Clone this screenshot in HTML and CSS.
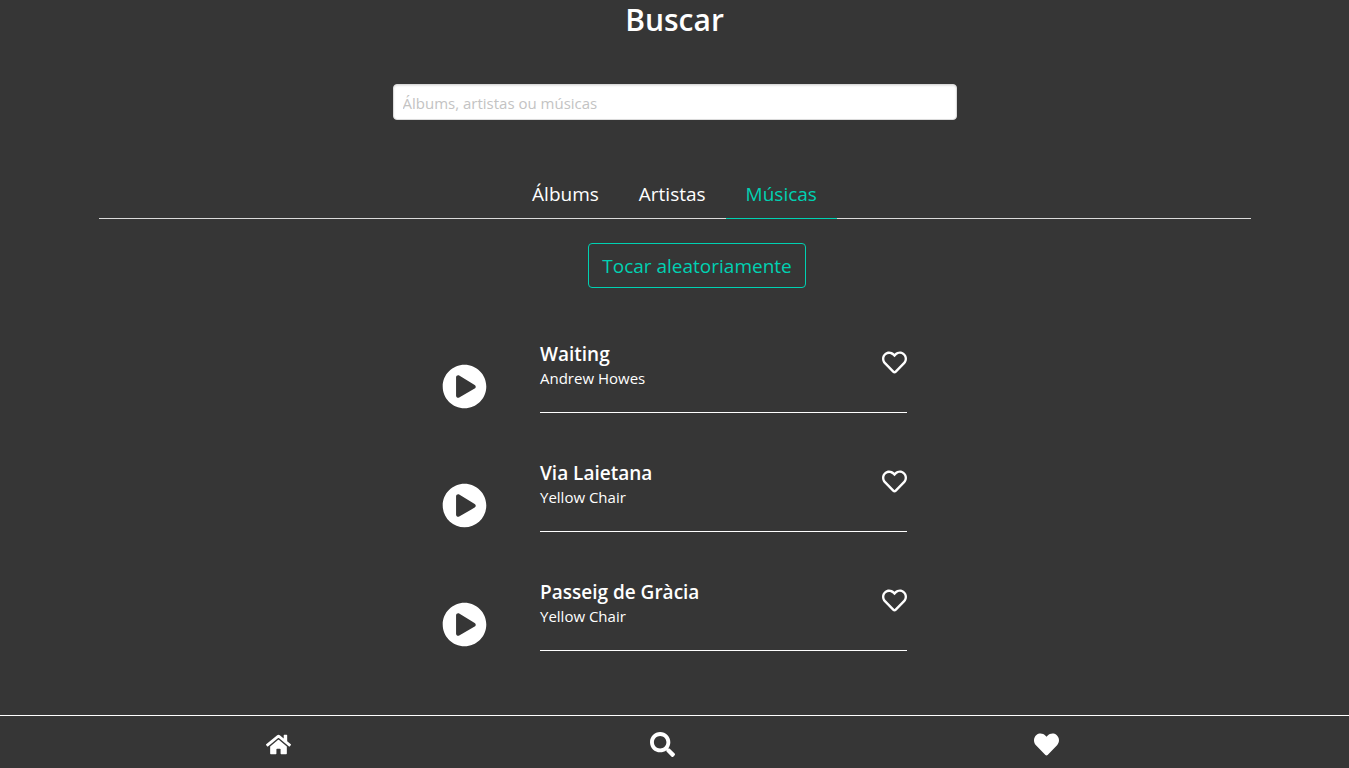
FILE: index.html
```html
<!DOCTYPE html>
<html lang="pt-BR">
<head>
<meta charset="utf-8">
<meta name="viewport" content="width=device-width, initial-scale=1">
<title>Buscar</title>
<link rel="stylesheet" href="styles.css">
</head>
<body>
<svg class="sprite" aria-hidden="true">
  <symbol id="play" viewBox="0 0 512 512"><path d="M256 8C119 8 8 119 8 256s111 248 248 248 248-111 248-248S393 8 256 8zm115.700 272l-176 101c-15.800 8.800-35.700-2.500-35.700-21V152c0-18.400 19.800-29.800 35.700-21l176 107c16.400 9.200 16.400 32.900 0 42z"/></symbol>
  <symbol id="heart-outline" viewBox="0 0 512 512"><path d="M458.400 64.300C400.600 15.700 311.300 23 256 79.300 200.700 23 111.400 15.600 53.600 64.300-21.600 127.600-10.600 230.800 43 285.500l175.400 178.700c10 10.200 23.400 15.900 37.600 15.900 14.300 0 27.600-5.600 37.600-15.800L469 285.600c53.500-54.700 64.700-157.900-10.600-221.300zm-23.600 187.500L259.400 430.500c-2.400 2.400-4.400 2.400-6.800 0L77.200 251.800c-36.500-37.200-43.900-107.600 7.300-150.700 38.900-32.700 98.900-27.800 136.500 10.500l35 35.700 35-35.700c37.800-38.500 97.800-43.200 136.500-10.600 51.100 43.100 43.500 113.900 7.300 150.800z"/></symbol>
  <symbol id="heart" viewBox="0 0 512 512"><path d="M462.300 62.600C407.500 15.900 326 24.300 275.700 76.200L256 96.500l-19.700-20.300C186.100 24.300 104.500 15.900 49.700 62.600c-62.800 53.600-66.100 149.800-9.900 207.900l193.500 199.800c12.500 12.900 32.800 12.900 45.300 0l193.500-199.800c56.300-58.100 53-154.300-9.800-207.900z"/></symbol>
  <symbol id="home" viewBox="0 0 576 512"><path d="M280.370 148.260L96 300.110V464a16 16 0 0 0 16 16l112.060-.29a16 16 0 0 0 15.920-16V368a16 16 0 0 1 16-16h64a16 16 0 0 1 16 16v95.640a16 16 0 0 0 16 16.050L464 480a16 16 0 0 0 16-16V300L295.670 148.260a12.190 12.190 0 0 0-15.300 0zM571.600 251.470L488 182.560V44.050a12 12 0 0 0-12-12h-56a12 12 0 0 0-12 12v72.610L318.470 43a48 48 0 0 0-61 0L4.340 251.470a12 12 0 0 0-1.600 16.900l25.500 31A12 12 0 0 0 45.150 301l235.220-193.740a12.190 12.190 0 0 1 15.300 0L530.900 301a12 12 0 0 0 16.900-1.600l25.500-31a12 12 0 0 0-1.700-16.930z"/></symbol>
  <symbol id="search" viewBox="0 0 512 512"><path d="M505 442.700L405.300 343c-4.500-4.500-10.600-7-17-7H372c27.600-35.300 44-79.700 44-128C416 93.100 322.900 0 208 0S0 93.100 0 208s93.100 208 208 208c48.300 0 92.700-16.400 128-44v16.300c0 6.400 2.500 12.500 7 17l99.700 99.700c9.400 9.400 24.600 9.400 33.900 0l28.300-28.300c9.400-9.400 9.400-24.600.1-34zM208 336c-70.700 0-128-57.200-128-128 0-70.700 57.200-128 128-128 70.700 0 128 57.200 128 128 0 70.700-57.200 128-128 128z"/></symbol>
</svg>

<main class="container">
  <h1 class="title">Buscar</h1>
  <form class="search">
    <input class="search-input" type="search" aria-label="Buscar" placeholder="Álbums, artistas ou músicas">
  </form>
  <nav class="tabs" aria-label="Resultados">
    <a class="tab" href="#albums">Álbums</a>
    <a class="tab" href="#artistas">Artistas</a>
    <a class="tab tab-active" href="#musicas" aria-current="page">Músicas</a>
  </nav>
  <section class="songs" id="musicas">
    <div class="shuffle">
      <button class="shuffle-button" type="button">Tocar aleatoriamente</button>
    </div>
    <ul class="song-list">
      <li class="song">
        <button class="icon-button play-button" type="button" aria-label="Tocar Waiting"><svg class="play-icon"><use href="#play"/></svg></button>
        <div class="song-body">
          <div class="song-text">
            <h2 class="song-name">Waiting</h2>
            <p class="song-artist">Andrew Howes</p>
          </div>
          <button class="icon-button like-button" type="button" aria-label="Curtir Waiting"><svg class="icon"><use href="#heart-outline"/></svg></button>
        </div>
      </li>
      <li class="song">
        <button class="icon-button play-button" type="button" aria-label="Tocar Via Laietana"><svg class="play-icon"><use href="#play"/></svg></button>
        <div class="song-body">
          <div class="song-text">
            <h2 class="song-name">Via Laietana</h2>
            <p class="song-artist">Yellow Chair</p>
          </div>
          <button class="icon-button like-button" type="button" aria-label="Curtir Via Laietana"><svg class="icon"><use href="#heart-outline"/></svg></button>
        </div>
      </li>
      <li class="song">
        <button class="icon-button play-button" type="button" aria-label="Tocar Passeig de Gràcia"><svg class="play-icon"><use href="#play"/></svg></button>
        <div class="song-body">
          <div class="song-text">
            <h2 class="song-name">Passeig de Gràcia</h2>
            <p class="song-artist">Yellow Chair</p>
          </div>
          <button class="icon-button like-button" type="button" aria-label="Curtir Passeig de Gràcia"><svg class="icon"><use href="#heart-outline"/></svg></button>
        </div>
      </li>
    </ul>
  </section>
</main>

<footer class="bottom-bar">
  <nav class="bottom-nav" aria-label="Principal">
    <a class="bottom-link" href="#inicio" aria-label="Início"><svg class="icon"><use href="#home"/></svg></a>
    <a class="bottom-link" href="#buscar" aria-label="Buscar"><svg class="icon"><use href="#search"/></svg></a>
    <a class="bottom-link" href="#favoritos" aria-label="Favoritos"><svg class="icon"><use href="#heart"/></svg></a>
  </nav>
</footer>
</body>
</html>
```
FILE: styles.css
```css
* {
  box-sizing: border-box;
  margin: 0;
  padding: 0;
}

body {
  display: flex;
  flex-direction: column;
  min-height: 100vh;
  background: #363636;
  color: #fff;
  font-family: "Segoe UI", "Open Sans", sans-serif;
  font-size: 15px;
  line-height: 24px;
}

button,
input {
  font: inherit;
}

a {
  color: inherit;
  text-decoration: none;
}

.sprite {
  display: none;
}

.container {
  width: 100%;
  max-width: 1152px;
  margin: 0 auto;
}

.title {
  font-size: 30px;
  font-weight: 600;
  line-height: 40px;
  text-align: center;
}

.search {
  width: 100%;
  max-width: 564px;
  margin: 44px auto 0;
}

.search-input {
  display: block;
  width: 100%;
  height: 36px;
  padding: 1px 9px 0;
  border: 1px solid #dbdbdb;
  border-radius: 4px;
  background: #fff;
  box-shadow: inset 0 1px 2px rgba(10, 10, 10, 0.1);
  color: #363636;
  appearance: none;
}

.search-input::placeholder {
  color: #c3c3c3;
  opacity: 1;
}

.tabs {
  display: flex;
  justify-content: center;
  margin-top: 50px;
  box-shadow: inset 0 -1px #dbdbdb;
  font-size: 19px;
}

.tab {
  padding: 12px 20px;
  border-bottom: 1px solid transparent;
}

.tab-active {
  border-bottom-color: #00d1b2;
  color: #00d1b2;
}

.songs {
  width: 100%;
  max-width: 465px;
  margin: 24px auto 0;
}

.shuffle {
  padding-left: 45px;
  text-align: center;
}

.shuffle-button {
  height: 45px;
  padding: 1px 13px 0;
  border: 1px solid #00d1b2;
  border-radius: 4px;
  background: transparent;
  color: #00d1b2;
  font-size: 19px;
  vertical-align: top;
}

.song-list {
  display: grid;
  gap: 48px;
  margin-top: 54px;
  list-style: none;
}

.song {
  display: flex;
  align-items: flex-start;
  gap: 53px;
}

.song-body {
  display: flex;
  flex: 1;
  align-items: flex-start;
  justify-content: space-between;
  padding-bottom: 22px;
  border-bottom: 1px solid #fff;
}

.song-name {
  font-size: 19px;
  font-weight: 600;
}

.icon-button {
  display: flex;
  border: 0;
  background: transparent;
  color: #fff;
}

.play-button {
  margin-top: 22px;
}

.like-button {
  margin-top: 8px;
}

.play-icon {
  width: 45px;
  height: 45px;
  fill: currentColor;
}

.icon {
  width: 25px;
  height: 25px;
  fill: currentColor;
}

.bottom-bar {
  margin-top: auto;
  border-top: 1px solid #fff;
}

.bottom-nav {
  display: grid;
  grid-template-columns: repeat(3, 1fr);
  width: 100%;
  max-width: 1176px;
  margin: 0 auto;
  padding: 16px 24px 11px 0;
}

.bottom-link {
  display: flex;
  justify-content: center;
}
```
